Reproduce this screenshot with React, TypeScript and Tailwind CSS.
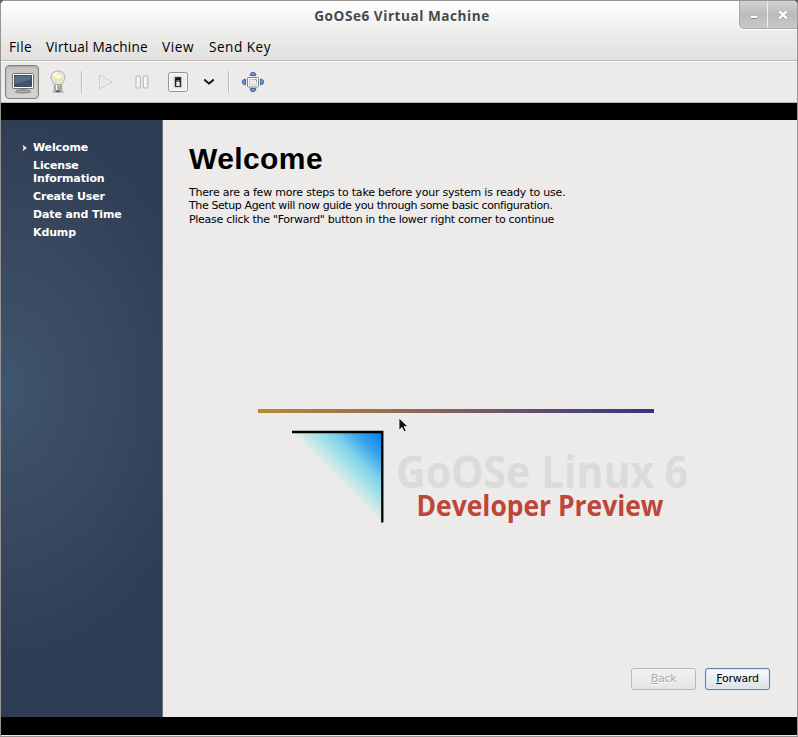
import React from "react";

const UI = "font-['Open_Sans','Noto_Sans',sans-serif]";

function MonitorIcon() {
  return (
    <svg width="24" height="22" viewBox="0 0 24 22" className="relative top-px left-px block">
      <ellipse cx="12" cy="20" rx="9" ry="1.8" fill="#777" opacity=".35" />
      <rect x="1.5" y="1.5" width="21" height="15" rx="1" fill="#fafafa" stroke="#6c706e" />
      <rect x="3.500" y="3.500" width="17" height="11" fill="#3f536d" stroke="#26374b" strokeWidth=".8" />
      <path d="M4 4h16v3L4 12z" fill="#8796a8" opacity=".4" />
      <rect x="9" y="17" width="6" height="1.5" fill="#aaa" />
      <rect x="5.5" y="18.3" width="13" height="1.7" rx=".6" fill="#f4f4f4" stroke="#555" strokeWidth=".8" />
    </svg>
  );
}

function BulbIcon() {
  return (
    <svg width="18" height="24" viewBox="0 0 18 24" className="block">
      <ellipse cx="9" cy="21.7" rx="6" ry="1.4" fill="#777" opacity=".5" />
      <path d="M9 1C4.800 1 2 4 2 7.500c0 3.500 2.800 4.600 3.300 7.500h7.400c.5-2.900 3.300-4 3.300-7.500C16 4 13.200 1 9 1z" fill="#e6e7e3" stroke="#a9aca5" strokeWidth=".9" />
      <ellipse cx="9" cy="7.500" rx="4.200" ry="2.400" fill="#fffce0" />
      <path d="M5 6l1 3h6l1-3M7 9V14M11 9V14" fill="none" stroke="#f0df70" strokeWidth="1" />
      <path d="M4.500 5.500c.8-1.600 2-2.400 3.500-2.600" fill="none" stroke="#fff" strokeWidth="1.500" />
      <rect x="5.400" y="14.800" width="7.200" height="6" rx="1" fill="#c5c8c4" stroke="#878a86" strokeWidth=".8" />
      <path d="M5.500 17h7M5.500 19h7" stroke="#7d807c" strokeWidth=".8" />
      <path d="M7.500 15v5" stroke="#fff" strokeWidth="1.200" />
      <rect x="7" y="20.500" width="4" height="1.500" rx=".7" fill="#555753" />
    </svg>
  );
}

function FullscreenIcon() {
  return (
    <svg width="24" height="22" viewBox="0 0 24 22" className="block">
      <g fill="#6b93c9" stroke="#34609b" strokeWidth=".9">
        <path d="M9.200 4.500c0-2 1.100-3.200 2.800-3.200s2.800 1.200 2.800 3.200z" />
        <path d="M9.200 17.500c0 2 1.100 3.200 2.800 3.200s2.800-1.200 2.800-3.200z" />
        <path d="M4.500 8.200c-2 0-3.200 1.100-3.200 2.800s1.200 2.800 3.200 2.800z" />
        <path d="M19.500 8.200c2 0 3.200 1.100 3.200 2.800s-1.200 2.800-3.200 2.800z" />
      </g>
      <rect x="6.500" y="6.500" width="11" height="9.500" rx=".8" fill="#fff" stroke="#85887f" />
      <rect x="8.500" y="8.500" width="7" height="5.500" fill="#ececea" stroke="#c0c2bd" strokeWidth=".8" />
      <path d="M13.500 8.500h2v2" fill="none" stroke="#8c8f89" strokeWidth=".8" />
    </svg>
  );
}

function Separator() {
  return <div className="h-[22px] w-[2px] border-l border-[#bdbbb8] bg-[#f8f8f7]" />;
}

function Header() {
  return (
    <header className={`flex h-[60px] shrink-0 flex-col border-b border-[#bcbab8] bg-linear-to-b from-white via-[#ececeb] via-55% to-[#e2e1df] ${UI}`}>
      <div className="flex h-[33px] items-start">
        <div className="w-[59px] shrink-0" />
        <h1 className="flex h-[31px] flex-1 items-center justify-center pl-[64px] text-[13.6px] font-bold text-[#454a4c] [text-shadow:0_1px_0_#fff]">
          <span className="mr-[59px] whitespace-nowrap tracking-[0.53px]">GoOSe6 Virtual Machine</span>
        </h1>
        <div className="flex h-[28px] w-[58px] shrink-0 overflow-hidden rounded-bl-[5px] border-b border-l border-[#a9a8a7] bg-linear-to-b from-[#d2d2d2] via-[#bcbbbb] via-50% to-[#cbc9c8] shadow-[0_1px_0_#fff]">
          <button className="flex w-[28px] items-center justify-center border-r border-[#eeeeee]">
            <svg width="8" height="8" viewBox="0 0 8 8" className="mt-1"><path d="M1 3h6v2H1z" fill="#fff" /><path d="M1 5h6v1H1z" fill="#8b8b8b" /></svg>
          </button>
          <button className="flex flex-1 items-center justify-center">
            <svg width="10" height="10" viewBox="0 0 10 10">
              <path d="M2 2.700l6 6M8 2.700l-6 6" stroke="#888" strokeWidth="2.500" />
              <path d="M1.500 1.500l7 7M8.500 1.500l-7 7" stroke="#fff" strokeWidth="2.400" />
            </svg>
          </button>
        </div>
      </div>
      <nav className="flex h-[27px] items-center pl-[8px] text-[13.6px] text-black">
        <span className="w-[37px] whitespace-nowrap tracking-[0.35px]">File</span>
        <span className="w-[116px] whitespace-nowrap tracking-[0.2px]">Virtual Machine</span>
        <span className="w-[47px] whitespace-nowrap tracking-[0.6px]">View</span>
        <span className="whitespace-nowrap tracking-[0.5px]">Send Key</span>
      </nav>
    </header>
  );
}

function Toolbar() {
  return (
    <div className="flex h-[42px] shrink-0 items-center border-t border-b border-t-[#fafafa] border-b-[#bab8b5] bg-[#ecebea] pl-[4px]">
      <button className="flex h-[34px] w-[34px] items-center justify-center rounded-[4px] border border-[#858381] bg-linear-to-b from-[#c9c5c2] to-[#d5d2cf] shadow-[inset_0_1px_2px_#a9a5a2]">
        <MonitorIcon />
      </button>
      <button className="ml-[10px]"><BulbIcon /></button>
      <div className="ml-[14px]"><Separator /></div>
      <svg width="18" height="18" viewBox="0 0 18 18" className="ml-[13px] block">
        <path d="M3.500 2.200L16 9 3.500 15.800z" fill="#e7e6e4" stroke="#cccdca" strokeLinejoin="round" />
        <path d="M4.600 4L13.800 9l-9.200 5z" fill="none" stroke="#f4f4f2" strokeWidth=".8" />
      </svg>
      <svg width="14" height="14" viewBox="0 0 14 14" className="ml-[21px] block">
        <g fill="#eeeeec" stroke="#b5b8b2"><rect x="1" y="1" width="4.500" height="12" rx=".6" /><rect x="8.300" y="1" width="4.500" height="12" rx=".6" /></g>
        <path d="M2.500 2.500v9M9.800 2.500v9" stroke="#fff" />
      </svg>
      <svg width="20" height="20" viewBox="0 0 20 20" className="ml-[19px] block">
        <rect x=".6" y=".6" width="18.800" height="18.800" rx="2" fill="#eeeeec" stroke="#898c87" />
        <rect x="1.700" y="1.700" width="16.600" height="16.600" rx="1.200" fill="none" stroke="#fff" />
        <rect x="6" y="4.500" width="8" height="11" rx="1" fill="#b8bab5" />
        <rect x="7.100" y="5.200" width="5.800" height="9.600" fill="#161616" />
        <path d="M8.300 10h3.400v4H8.300z" fill="#eee" /><path d="M8.300 8h3.400v2H8.300z" fill="#777" />
      </svg>
      <svg width="12" height="8" viewBox="0 0 12 8" className="ml-[15px] block">
        <path d="M1.300 1.600C3 3 4.500 4.200 6 5.600 7.500 4.200 9 3 10.700 1.600" fill="none" stroke="#151515" strokeWidth="2" />
      </svg>
      <div className="ml-[13px]"><Separator /></div>
      <button className="ml-[11px]"><FullscreenIcon /></button>
    </div>
  );
}

const steps = ["Welcome", "License Information", "Create User", "Date and Time", "Kdump"];

function Sidebar() {
  return (
    <aside className="w-[162px] shrink-0 border-r border-[#68727d] bg-[radial-gradient(ellipse_215px_280px_at_0%_45%,#3f556f_0%,#39495f_50%,#2f3d54_100%)] pt-[21px]">
      <ul className="flex flex-col gap-[5px] font-['DejaVu_Sans',sans-serif] text-[11px] leading-[13px] font-bold tracking-[-0.13px] text-white">
        {steps.map((step, index) => (
          <li key={step} className="flex">
            <span className="flex w-[32px] shrink-0 items-center pl-[21px]">
              {index === 0 && <svg width="5" height="6" viewBox="0 0 5 6"><path d="M1 .5L4.500 3 1 5.500 2 3z" fill="#fff" stroke="#fff" strokeWidth=".6" /></svg>}
            </span>
            <span className="w-[100px]">{step}</span>
          </li>
        ))}
      </ul>
    </aside>
  );
}

function Artwork() {
  return (
    <svg width="440" height="130" viewBox="250 400 440 130" className="mt-[174px] ml-[87px] block shrink-0 overflow-visible">
      <defs>
        <linearGradient id="bar"><stop stopColor="#b98a35" /><stop offset=".5" stopColor="#805f65" /><stop offset="1" stopColor="#35357c" /></linearGradient>
        <linearGradient id="sail" gradientUnits="userSpaceOnUse" x1="382" y1="432" x2="336" y2="478">
          <stop stopColor="#007bf0" /><stop offset=".3" stopColor="#37a5ec" /><stop offset=".55" stopColor="#7dd2ea" /><stop offset=".8" stopColor="#b4e5e8" /><stop offset="1" stopColor="#ecebea" />
        </linearGradient>
      </defs>
      <rect x="258" y="409" width="396" height="4" fill="url(#bar)" />
      <path d="M291.500 432H382v90.500z" fill="url(#sail)" />
      <path d="M292 432H382.300V522.500" fill="none" stroke="#000" strokeWidth="2.300" />
      <text x="396" y="488" textLength="292" lengthAdjust="spacingAndGlyphs" fontFamily="Open Sans, sans-serif" fontWeight="700" fontSize="45" fill="#d9dcdb">GoOSe Linux 6</text>
      <text x="416.500" y="516" textLength="247" lengthAdjust="spacingAndGlyphs" fontFamily="Open Sans, sans-serif" fontWeight="700" fontSize="29" fill="#bc4639">Developer Preview</text>
      <path d="M399 418v12.300l2.900-2.800 2.300 4.200 2-1-2.100-4h4z" fill="#111" stroke="#fafafa" strokeWidth=".8" />
    </svg>
  );
}

function Content() {
  return (
    <main className="flex min-w-0 flex-1 flex-col bg-[#ecebea] font-['DejaVu_Sans',sans-serif] text-black">
      <h2 className="mt-[20px] ml-[26px] h-[38px] font-['Liberation_Sans',Arial,sans-serif] text-[30px] leading-[38px] font-bold tracking-[0.4px]">Welcome</h2>
      <div className="mt-[8px] ml-[26px] text-[11px] leading-[13.3px] whitespace-nowrap">
        <p className="tracking-[-0.215px]">There are a few more steps to take before your system is ready to use.</p>
        <p className="tracking-[-0.39px]">The Setup Agent will now guide you through some basic configuration.</p>
        <p className="tracking-[-0.29px]">Please click the "Forward" button in the lower right corner to continue</p>
      </div>
      <Artwork />
      <div className="mt-auto mr-[27px] mb-[27px] flex justify-end gap-[9px] text-[11px] tracking-[-0.25px]">
        <button className="h-[22px] w-[65px] rounded-[3px] border border-[#bab9b7] bg-linear-to-b from-[#f2f2f1] to-[#e6e5e3] text-[#aaa9a7] [text-shadow:0_1px_0_#fff]"><span className="underline">B</span>ack</button>
        <button className="h-[22px] w-[65px] rounded-[3px] border border-[#6483ae] bg-linear-to-b from-[#fafbfb] to-[#dce1e6] shadow-[inset_0_0_0_1px_#dbe7f3,0_0_1px_#9aabc4]"><span className="underline">F</span>orward</button>
      </div>
    </main>
  );
}

export default function App() {
  return (
    <div className="h-[737px] w-[798px] bg-[#52636b]">
      <div className="flex h-full w-full flex-col overflow-hidden rounded-t-[5px] border border-[#969594] bg-[#ecebea]">
        <Header />
        <Toolbar />
        <div className="flex h-[632px] shrink-0 flex-col bg-black pt-[17px] pb-[18px]">
          <div className="flex min-h-0 flex-1">
            <Sidebar />
            <Content />
          </div>
        </div>
      </div>
    </div>
  );
}
